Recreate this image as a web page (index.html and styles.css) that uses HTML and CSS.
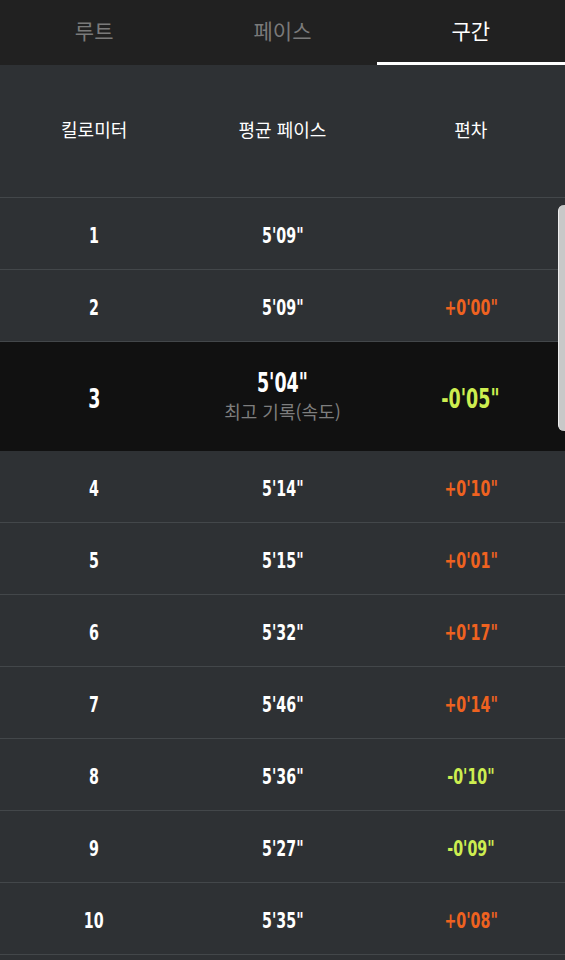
FILE: index.html
```html
<!DOCTYPE html>
<html lang="ko">
<head>
  <meta charset="UTF-8" />
  <meta name="viewport" content="width=device-width, initial-scale=1.0"/>
  <title>구간</title>
  <link rel="stylesheet" href="styles.css">
</head>
<body>

<!-- Tabs -->
<div class="tabs">
  <div class="tab">루트</div>
  <div class="tab">페이스</div>
  <div class="tab active">구간</div>
</div>

<!-- Splits table -->
<div class="splits">
  <div class="row head">
    <div>킬로미터</div>
    <div>평균 페이스</div>
    <div>편차</div>
  </div>

  <div class="row">
    <div class="num"><span>1</span></div>
    <div class="num"><span>5'09"</span></div>
    <div class="num"></div>
  </div>
  <div class="row">
    <div class="num"><span>2</span></div>
    <div class="num"><span>5'09"</span></div>
    <div class="num slow"><span>+0'00"</span></div>
  </div>
  <div class="row best">
    <div class="num"><span>3</span></div>
    <div class="pace">
      <div class="num"><span>5'04"</span></div>
      <div class="label">최고 기록(속도)</div>
    </div>
    <div class="num fast"><span>-0'05"</span></div>
  </div>
  <div class="row">
    <div class="num"><span>4</span></div>
    <div class="num"><span>5'14"</span></div>
    <div class="num slow"><span>+0'10"</span></div>
  </div>
  <div class="row">
    <div class="num"><span>5</span></div>
    <div class="num"><span>5'15"</span></div>
    <div class="num slow"><span>+0'01"</span></div>
  </div>
  <div class="row">
    <div class="num"><span>6</span></div>
    <div class="num"><span>5'32"</span></div>
    <div class="num slow"><span>+0'17"</span></div>
  </div>
  <div class="row">
    <div class="num"><span>7</span></div>
    <div class="num"><span>5'46"</span></div>
    <div class="num slow"><span>+0'14"</span></div>
  </div>
  <div class="row">
    <div class="num"><span>8</span></div>
    <div class="num"><span>5'36"</span></div>
    <div class="num fast"><span>-0'10"</span></div>
  </div>
  <div class="row">
    <div class="num"><span>9</span></div>
    <div class="num"><span>5'27"</span></div>
    <div class="num fast"><span>-0'09"</span></div>
  </div>
  <div class="row">
    <div class="num"><span>10</span></div>
    <div class="num"><span>5'35"</span></div>
    <div class="num slow"><span>+0'08"</span></div>
  </div>

  <!-- scroll thumb -->
  <div class="scroll-thumb"></div>
</div>

</body>
</html>
```

FILE: styles.css
```css
* { box-sizing: border-box; }

body, html {
  margin: 0;
  padding: 0;
  font-family: "Noto Sans CJK KR", "Noto Sans", sans-serif;
  background-color: #2e3134;
  color: white;
  height: 100%;
  overflow: hidden;
}

.tabs {
  display: grid;
  grid-template-columns: 1fr 1fr 1fr;
  height: 65px;
  background-color: #212121;
}

.tab {
  display: flex;
  align-items: center;
  justify-content: center;
  font-size: 21px;
  color: #7a7a7a;
  padding-bottom: 3px;
  border-bottom: 3px solid transparent;
}

.tab.active {
  color: #fff;
  border-bottom-color: #fff;
}

.splits {
  position: relative;
}

.row {
  display: grid;
  grid-template-columns: 1fr 1fr 1fr;
  align-items: center;
  text-align: center;
  height: 72px;
  border-bottom: 1px solid #43474a;
}

.row.head {
  height: 133px;
  font-size: 18px;
  padding-bottom: 4px;
}

.row.best {
  height: 109px;
  background-color: #111111;
  border-bottom-color: #111111;
}

.num {
  font-family: "Liberation Sans Narrow", "DejaVu Sans Condensed", sans-serif;
  font-weight: bold;
  font-size: 22px;
  padding-top: 4px;
}

.num span {
  display: inline-block;
  transform: scaleX(0.72);
}

.row.best > .num,
.pace .num {
  font-size: 27px;
}

.pace .num {
  padding-top: 0;
  line-height: 30px;
}

.pace .label {
  font-size: 18px;
  color: #7e7e7e;
  line-height: 26px;
}

.slow { color: #ee6220; }
.fast { color: #cdee50; }

.scroll-thumb {
  position: absolute;
  right: 0;
  top: 140px;
  width: 7px;
  height: 226px;
  background-color: #c8c8c8;
  border-left: 1px solid #eeeeee;
  border-radius: 6px 0 0 6px;
}
```
